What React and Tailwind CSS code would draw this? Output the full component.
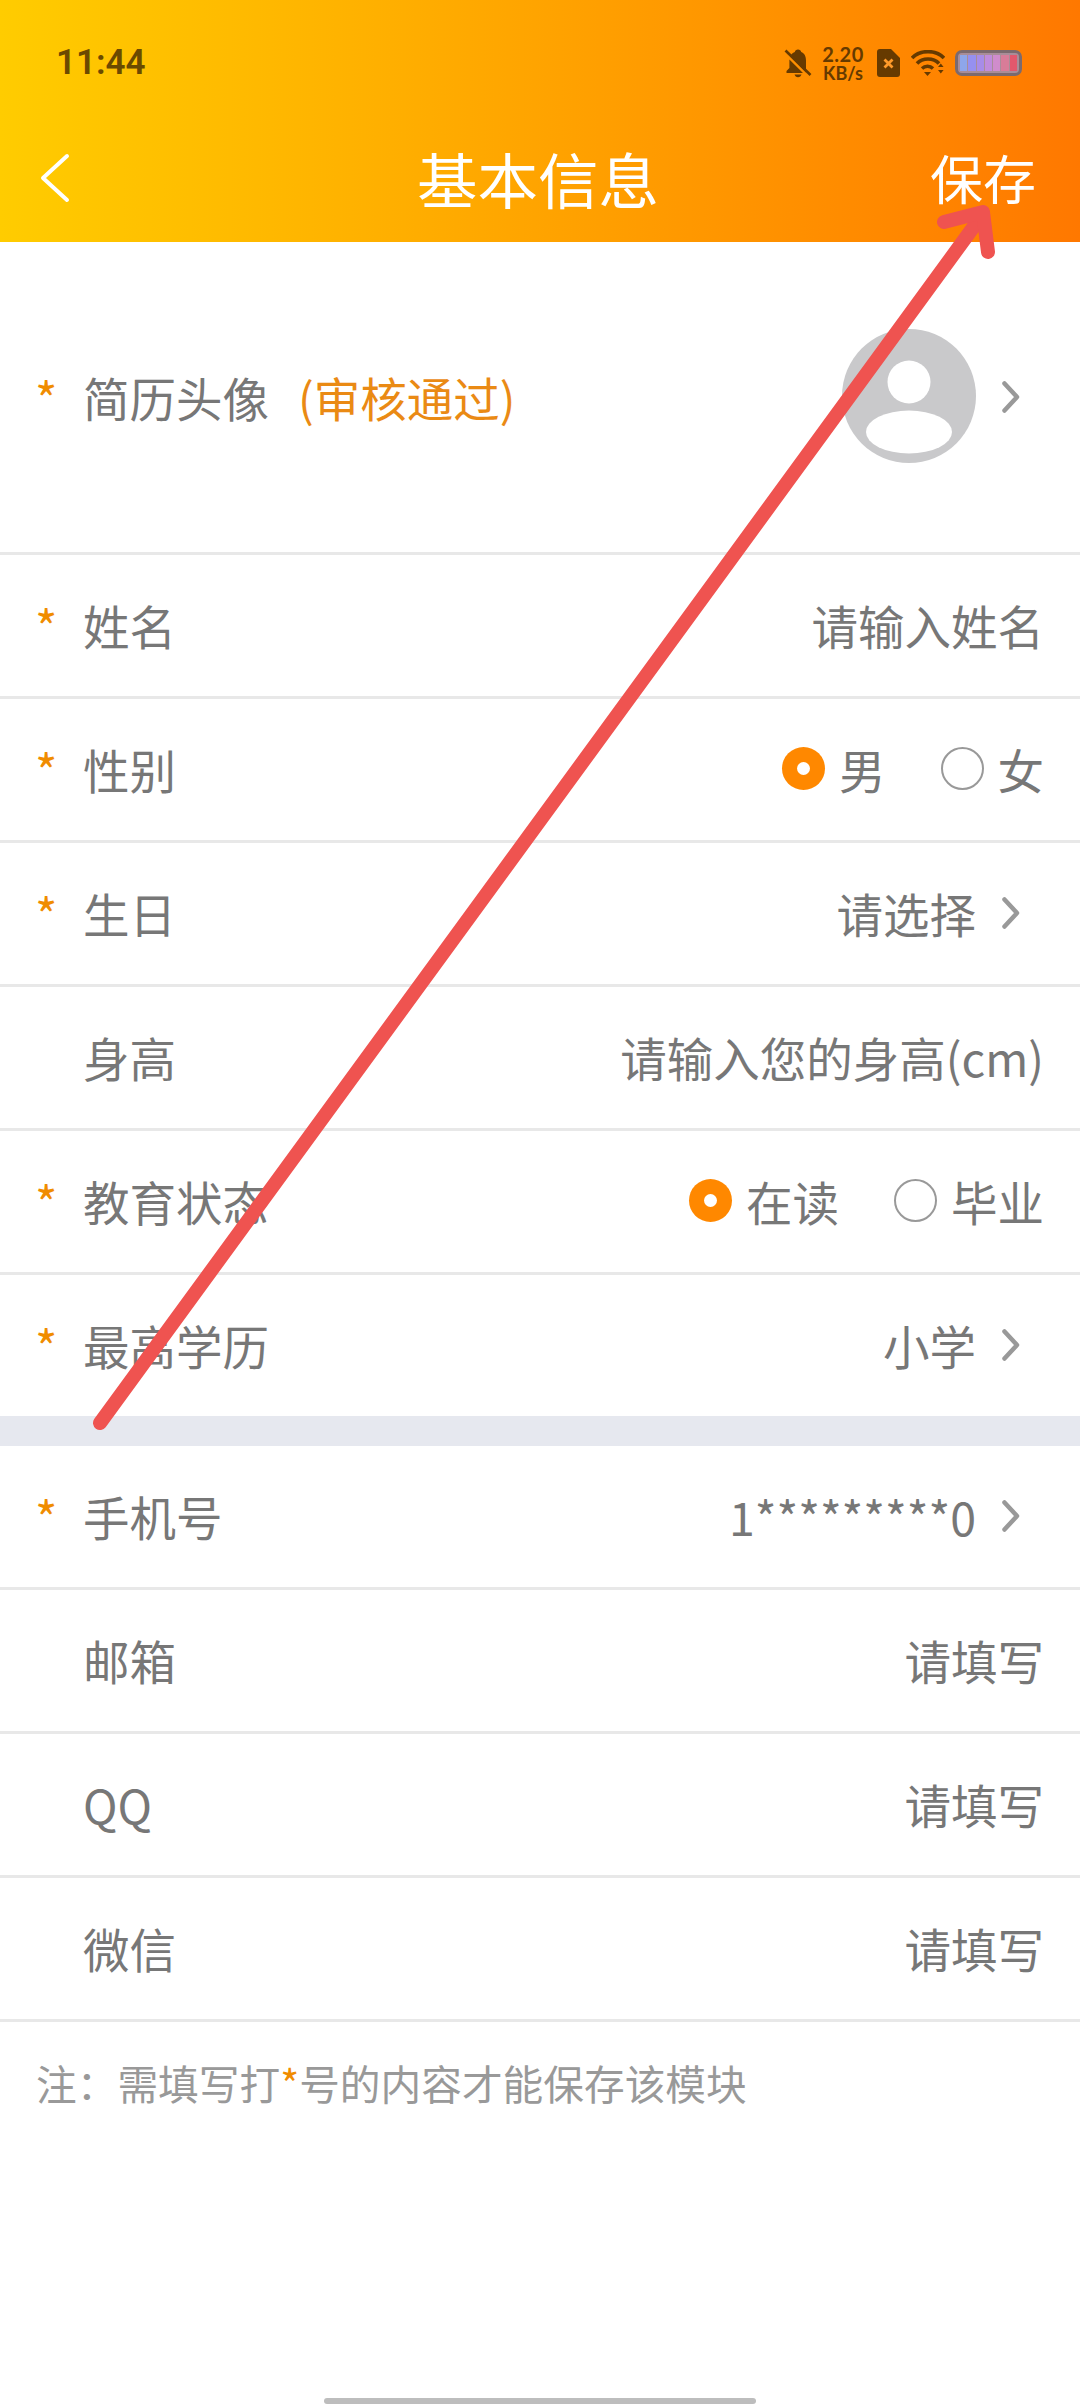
import React from "react";

const FONT = "font-['Noto_Sans_CJK_SC','Noto_Sans',sans-serif]";

function Chevron() {
  return (
    <svg width="18" height="32" viewBox="0 0 18 32" className="ml-[26px] mr-[24px] shrink-0" fill="none">
      <path d="M2.5 2.5 L15 16 L2.5 29.5" stroke="#999999" strokeWidth="4.5" strokeLinecap="round" strokeLinejoin="round" />
    </svg>
  );
}

function Radio({ checked, label }) {
  return (
    <div className="flex items-center gap-[14px]">
      {checked ? (
        <span className="w-[43px] h-[43px] rounded-full bg-[#ff8800] flex items-center justify-center">
          <span className="w-[13px] h-[13px] rounded-full bg-white" />
        </span>
      ) : (
        <span className="w-[43px] h-[43px] rounded-full border-2 border-[#999999]" />
      )}
      <span>{label}</span>
    </div>
  );
}

function Row({ label, required, children, last }) {
  return (
    <div className={`flex items-center justify-between pr-[36px] pb-[2px] ${last ? "h-[141px]" : "h-[144px] border-b-[3px] border-[#e8e8e8]"}`}>
      <div className="flex items-center">
        <span className="w-[83px] pl-[35px] h-[58px] text-[#f08c00] leading-[58px] text-[48px]">{required ? "*" : ""}</span>
        <span>{label}</span>
      </div>
      <div className="flex items-center text-[#777777]">{children}</div>
    </div>
  );
}

function StatusIcons() {
  return (
    <div className="flex items-center text-[#663a00]">
      <svg width="28" height="30" viewBox="0 0 28 30" className="mr-[8px]">
        <path d="M14 1.5c-1.7 0-3 1.2-3.2 2.6C8.600 5 7 6.500 6.300 8.500L22 24.500V12.500c0-4-1.700-7.400-4.800-8.400C17 2.700 15.700 1.500 14 1.500z" fill="#663a00" />
        <path d="M5.400 11.500L19 25H2.500v-2l2.900-3z" fill="#663a00" />
        <path d="M10.500 26.500h7c-.4 1.600-1.800 2.800-3.500 2.800s-3.100-1.200-3.500-2.800z" fill="#663a00" />
        <path d="M1.500 2.500L26.500 27" stroke="#663a00" strokeWidth="2.600" />
      </svg>
      <div className="w-[46px] flex flex-col items-center font-['Lato',sans-serif] font-bold leading-none mr-[11px]">
        <span className="text-[20px] leading-[20px] tracking-[0.5px]">2.20</span>
        <span className="text-[18px] leading-[18px]">KB/s</span>
      </div>
      <svg width="23" height="28" viewBox="0 0 23 28" className="mr-[11px]">
        <path d="M3 0h11l9 9v16a3 3 0 0 1-3 3H3a3 3 0 0 1-3-3V3a3 3 0 0 1 3-3z" fill="#663a00" />
        <path d="M7.500 10.500l8 8M15.500 10.500l-8 8" stroke="#ff9a2a" strokeWidth="2.800" />
      </svg>
      <svg width="34" height="26" viewBox="0 0 34 26" className="mr-[10px]">
        <path d="M1 8C9-.5 25-.5 33 8" fill="none" stroke="#663a00" strokeWidth="3.600" />
        <path d="M6 13.500C11.500 7.500 22.500 7.500 28 13.500" fill="none" stroke="#663a00" strokeWidth="3.600" />
        <path d="M11 18.500c3-3 8-3 11 0" fill="none" stroke="#663a00" strokeWidth="3.400" />
        <path d="M13 22h7l-3.500 4z" fill="#663a00" />
        <path d="M27 17l2.800-3.500 2.800 3.500zM27 20h5.600l-2.800 3.500z" fill="#663a00" />
      </svg>
      <div className="w-[67px] h-[26px] rounded-[7px] border-[3px] border-[#7c6a6e] bg-[#a98d98] flex items-center gap-[1px] p-[2px] overflow-hidden">
        <span className="flex-1 h-full bg-[#8ea6ea]" />
        <span className="flex-1 h-full bg-[#9690f0]" />
        <span className="flex-1 h-full bg-[#a88ce8]" />
        <span className="flex-1 h-full bg-[#c08cdc]" />
        <span className="flex-1 h-full bg-[#d08ccc]" />
        <span className="flex-1 h-full bg-[#d87c98]" />
        <span className="flex-1 h-full bg-[#e2586c]" />
      </div>
    </div>
  );
}

export default function App() {
  return (
    <div className={`relative w-[1080px] h-[2408px] bg-white overflow-hidden flex flex-col text-[46.5px] text-[#777777] ${FONT}`}>
      <header className="h-[242px] bg-gradient-to-r from-[#ffcc00] to-[#ff7800] shrink-0">
        <div className="h-[102px] mt-[12px] pl-[56px] pr-[58px] flex items-center justify-between">
          <span className="font-['Roboto',sans-serif] font-semibold text-[35px] text-[#6b4a00]">11:44</span>
          <StatusIcons />
        </div>
        <div className="h-[128px] grid grid-cols-3 items-center pl-[40px] pr-[44px]">
          <svg width="30" height="50" viewBox="0 0 30 50" fill="none">
            <path d="M27 3 L3 25 L27 47" stroke="#ffffff" strokeWidth="4" strokeLinecap="round" strokeLinejoin="round" />
          </svg>
          <span className="text-[60.5px] text-white text-center whitespace-nowrap">基本信息</span>
          <span className="text-[53px] text-white text-right">保存</span>
        </div>
      </header>

      <div className="h-[313px] flex items-center justify-between pr-[36px] border-b-[3px] border-[#e8e8e8] shrink-0">
        <div className="flex items-center">
          <span className="w-[83px] pl-[35px] h-[58px] text-[#f08c00] leading-[58px] text-[48px]">*</span>
          <span>简历头像</span>
          <span className="ml-[29px] text-[#ea8a14]">(审核通过)</span>
        </div>
        <div className="flex items-center">
          <svg width="134" height="134" viewBox="0 0 134 134" className="mb-[2px]">
            <circle cx="67" cy="67" r="67" fill="#c9c9cb" />
            <circle cx="67" cy="53" r="21.500" fill="#ffffff" />
            <ellipse cx="67" cy="103" rx="43" ry="21.500" fill="#ffffff" />
          </svg>
          <Chevron />
        </div>
      </div>

      <Row label="姓名" required>请输入姓名</Row>
      <Row label="性别" required>
        <Radio checked label="男" />
        <div className="ml-[55px]"><Radio label="女" /></div>
      </Row>
      <Row label="生日" required>请选择<Chevron /></Row>
      <Row label="身高">请输入您的身高(cm)</Row>
      <Row label="教育状态" required>
        <Radio checked label="在读" />
        <div className="ml-[55px]"><Radio label="毕业" /></div>
      </Row>
      <Row label="最高学历" required last>小学<Chevron /></Row>

      <div className="h-[30px] bg-[#e6e8ef] shrink-0" />

      <Row label="手机号" required>1*********0<Chevron /></Row>
      <Row label="邮箱">请填写</Row>
      <Row label="QQ">请填写</Row>
      <Row label="微信">请填写</Row>

      <p className="mt-[36px] pl-[36px] text-[40.7px] leading-[50px] text-[#999999]">
        注：需填写打<span className="text-[#f08c00]">*</span>号的内容才能保存该模块
      </p>

      <div className="mt-auto mb-[4px] mx-auto w-[432px] h-[6px] rounded-full bg-[#bdbdbd]" />

      {/* hand drawn red arrow on top of the screenshot */}
      <svg className="absolute inset-0 pointer-events-none" width="1080" height="2408" viewBox="0 0 1080 2408" fill="none">
        <path d="M100 1423 L983 214" stroke="#ef5350" strokeWidth="14" strokeLinecap="round" />
        <path d="M944 222 L983 212 L988 252" stroke="#ef5350" strokeWidth="14" strokeLinecap="round" strokeLinejoin="round" />
      </svg>
    </div>
  );
}
